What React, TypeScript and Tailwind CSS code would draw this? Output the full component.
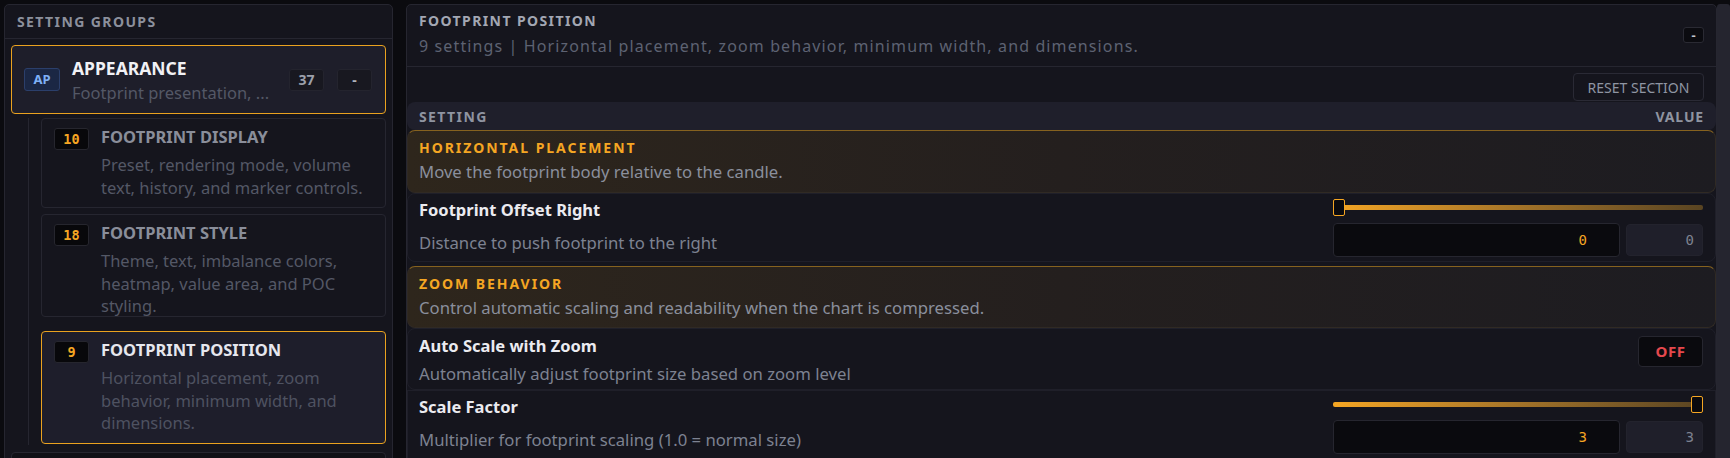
import React from "react";

const sans = "font-['Noto_Sans',sans-serif]";
const mono = "font-['DejaVu_Sans_Mono',monospace]";

type Sub = {
  count: string;
  title: string;
  desc: string;
  selected?: boolean;
  height: string;
  margin: string;
};

const subGroups: Sub[] = [
  {
    count: "10",
    title: "FOOTPRINT DISPLAY",
    desc: "Preset, rendering mode, volume text, history, and marker controls.",
    height: "h-[90px]",
    margin: "mt-0",
  },
  {
    count: "18",
    title: "FOOTPRINT STYLE",
    desc: "Theme, text, imbalance colors, heatmap, value area, and POC styling.",
    height: "h-[103px]",
    margin: "mt-[6px]",
  },
  {
    count: "9",
    title: "FOOTPRINT POSITION",
    desc: "Horizontal placement, zoom behavior, minimum width, and dimensions.",
    selected: true,
    height: "h-[113px]",
    margin: "mt-[14px]",
  },
];

function SubGroupCard({ g }: { g: Sub }) {
  return (
    <div
      className={`${g.height} ${g.margin} flex items-start rounded-[4px] border pl-3 pr-3 pt-[7px] ${
        g.selected ? "border-[#eaa21f] bg-[#1e1e2b]" : "border-[#262630] bg-[#15151d]"
      }`}
    >
      <div
        className={`${mono} mt-[2px] flex h-[22px] w-[35px] shrink-0 items-center justify-center rounded-[3px] border border-[#26262e] bg-[#08080b] text-[13.5px] font-bold text-[#f5a623]`}
      >
        {g.count}
      </div>
      <div className="ml-3 min-w-0 flex-1">
        <div
          className={`text-[16.5px] font-bold leading-[22px] ${
            g.selected ? "text-[#e6e7ee]" : "text-[#8a8e9a]"
          }`}
        >
          {g.title}
        </div>
        <div
          className={`mt-[6px] text-[16.5px] leading-[22.5px] ${
            g.selected ? "text-[#4e5261]" : "text-[#545866]"
          }`}
        >
          {g.desc}
        </div>
      </div>
    </div>
  );
}

function GroupsPanel() {
  return (
    <div className="h-[470px] w-[389px] shrink-0 overflow-hidden rounded-[5px] border border-[#262630] bg-[#15151d]">
      <div className="flex h-[34px] items-center border-b border-[#262630] pl-3">
        <span className="text-[14px] font-bold tracking-[0.1em] text-[#8c909c]">SETTING GROUPS</span>
      </div>
      <div className="px-[6px] pt-[6px]">
        {/* active group */}
        <div className="flex h-[69px] items-center rounded-[4px] border border-[#eaa21f] bg-[#1e1e2a] pl-3 pr-[13px]">
          <div className="flex h-[23px] w-[36px] shrink-0 items-center justify-center rounded-[3px] border border-[#2b3f6b] bg-[#1b2744] text-[13px] font-bold text-[#7fb0f5]">
            AP
          </div>
          <div className="ml-3 min-w-0 flex-1">
            <div className="text-[17.5px] font-bold leading-[24px] text-[#f1f1f5]">APPEARANCE</div>
            <div className="mt-[2px] whitespace-nowrap text-[16.5px] leading-[22px] text-[#545866]">
              Footprint presentation, ...
            </div>
          </div>
          <div className="flex h-[22px] w-[35px] items-center justify-center rounded-[3px] border border-[#24242e] bg-[#181820] text-[14px] font-bold text-[#9ca0ab]">
            37
          </div>
          <div className="ml-[13px] flex h-[22px] w-[35px] items-center justify-center rounded-[3px] border border-[#24242e] bg-[#181820] text-[14px] font-bold text-[#b0b4bd]">
            -
          </div>
        </div>

        {/* child sections, joined by a tree line */}
        <div className="ml-[17px] mt-[4px] border-l border-[#262630] pb-px pl-3">
          {subGroups.map((g) => (
            <SubGroupCard key={g.title} g={g} />
          ))}
        </div>

        <div className="mt-[7px] h-[40px] rounded-[4px] border border-[#262630] bg-[#101016]" />
      </div>
    </div>
  );
}

function SectionHeader({ title, desc, h }: { title: string; desc: string; h: string }) {
  return (
    <div
      className={`${h} rounded-lg border border-[#302a24] border-t-[#86621f] bg-gradient-to-r from-[#2e261c] via-[#241f1e] to-[#1d1c21] pl-[11px] pt-[6px]`}
    >
      <div className="text-[14px] font-bold leading-[22px] tracking-[0.14em] text-[#f5a623]">{title}</div>
      <div className="mt-[1px] text-[16.7px] leading-[24px] text-[#8a8f9c]">{desc}</div>
    </div>
  );
}

function Slider({ pos }: { pos: "start" | "end" }) {
  return (
    <div className="relative flex h-[22px] items-center">
      <div className="h-[5px] w-full rounded-[2px] bg-gradient-to-r from-[#f5a623] to-[#594422]" />
      <div
        className={`absolute top-[2.5px] h-[17px] w-[12px] rounded-[2px] border border-[#f5a623] bg-[#0a0a0e] ${
          pos === "start" ? "left-0" : "right-0"
        }`}
      />
    </div>
  );
}

function NumberRow({
  title,
  desc,
  value,
  pos,
  rounded,
}: {
  title: string;
  desc: string;
  value: string;
  pos: "start" | "end";
  rounded?: boolean;
}) {
  return (
    <div
      className={`grid grid-cols-[1fr_370px] grid-rows-[22px_34px] gap-x-4 gap-y-[5px] border border-[#1f1f29] pb-[4px] pl-[11px] pr-3 pt-[2px] ${
        rounded ? "rounded-lg" : "border-b-0"
      }`}
    >
      <div className="flex items-center pt-[6px] text-[16.5px] font-bold text-[#ebebf0]">{title}</div>
      <Slider pos={pos} />
      <div className="flex items-center pt-[5px] text-[16.7px] text-[#7d8291]">{desc}</div>
      <div className="flex items-center gap-[6px]">
        <div
          className={`${mono} flex h-[34px] flex-1 items-center justify-end rounded-[4px] border border-[#26262f] bg-[#0a0a0e] pr-[32px] text-[14px] text-[#f5a623]`}
        >
          {value}
        </div>
        <div
          className={`${mono} flex h-[32px] w-[77px] items-center justify-end rounded-[4px] border border-[#23232d] bg-[#1f1f2a] pr-[8px] text-[14px] text-[#7d8290]`}
        >
          {value}
        </div>
      </div>
    </div>
  );
}

function ToggleRow({ title, desc }: { title: string; desc: string }) {
  return (
    <div className="flex h-[62px] items-start rounded-lg border border-[#1f1f29] pl-[11px] pr-3 pt-[7px]">
      <div className="-mt-px flex-1">
        <div className="text-[16.5px] font-bold leading-[22px] text-[#ebebf0]">{title}</div>
        <div className="mt-[6px] text-[16.7px] leading-[22px] text-[#7d8291]">{desc}</div>
      </div>
      <div className="flex h-[31px] w-[65px] items-center justify-center rounded-[4px] border border-[#26262f] bg-[#0a0a0e] text-[15px] font-bold tracking-[0.04em] text-[#e5484d]">
        OFF
      </div>
    </div>
  );
}

function DetailPanel() {
  return (
    <div className="ml-[13px] flex min-w-0 flex-1">
      <div className="h-[470px] min-w-0 flex-1 overflow-hidden rounded-t-[5px] border border-[#262630] bg-[#15151d]">
        <div className="relative h-[62px] border-b border-[#262630] pl-3 pt-[6px]">
          <div className="text-[14px] font-bold leading-[20px] tracking-[0.1em] text-[#a3a7b3]">FOOTPRINT POSITION</div>
          <div className="mt-[3px] text-[16px] leading-[24px] tracking-[0.07em] text-[#5d6272]">
            9 settings | Horizontal placement, zoom behavior, minimum width, and dimensions.
          </div>
          <div className="absolute right-[12px] top-[22px] flex h-[16px] w-[21px] items-center justify-center rounded-[3px] border border-[#2a2a33] bg-[#0b0b10] text-[13px] font-bold leading-none text-[#c0c4cc]">
            -
          </div>
        </div>

        <div className="flex h-[35px] items-start justify-end pr-3 pt-[6px]">
          <div className="flex h-[28px] w-[131px] items-center justify-center rounded-[4px] border border-[#2a2a35] bg-[#15151d] text-[14px] text-[#8f95a3]">
            RESET SECTION
          </div>
        </div>

        <div className="flex h-[28px] items-center justify-between rounded-lg bg-[#1f1f2b] pl-3 pr-3">
          <span className="text-[14px] font-bold tracking-[0.1em] text-[#8f94a1]">SETTING</span>
          <span className="text-[14px] font-bold tracking-[0.06em] text-[#8f94a1]">VALUE</span>
        </div>

        <SectionHeader h="h-[63px]" title="HORIZONTAL PLACEMENT" desc="Move the footprint body relative to the candle." />
        <NumberRow
          title="Footprint Offset Right"
          desc="Distance to push footprint to the right"
          value="0"
          pos="start"
          rounded
        />

        <div className="mt-[4px]">
          <SectionHeader
            h="h-[62px]"
            title="ZOOM BEHAVIOR"
            desc="Control automatic scaling and readability when the chart is compressed."
          />
        </div>
        <ToggleRow title="Auto Scale with Zoom" desc="Automatically adjust footprint size based on zoom level" />
        <NumberRow
          title="Scale Factor"
          desc="Multiplier for footprint scaling (1.0 = normal size)"
          value="3"
          pos="end"
        />
      </div>
      {/* scrollbar thumb */}
      <div className="h-[470px] w-[13px] shrink-0 rounded-t-[3px] bg-[#25252f]" />
    </div>
  );
}

export default function App() {
  return (
    <div className={`${sans} flex h-[458px] w-[1730px] overflow-hidden bg-[#0b0b0f] pl-[4px] pt-[4px]`}>
      <GroupsPanel />
      <DetailPanel />
    </div>
  );
}
